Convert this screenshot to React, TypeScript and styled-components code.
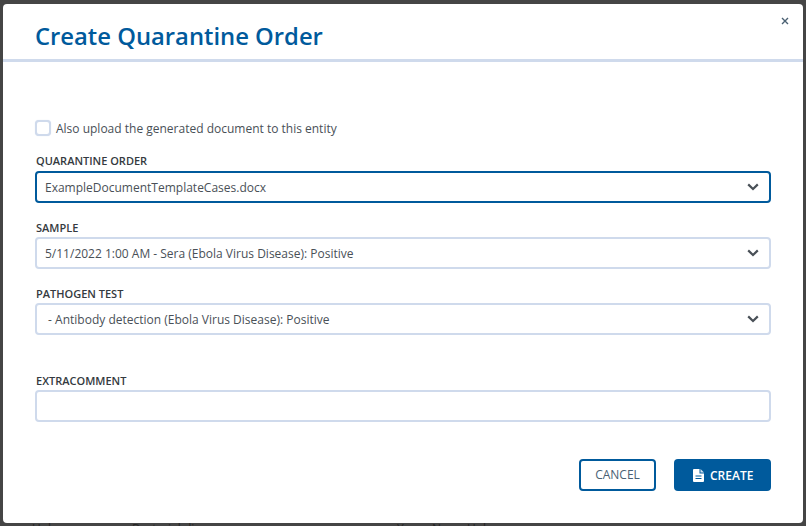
import { ReactNode } from 'react';
import styled, { createGlobalStyle } from 'styled-components';

const GlobalStyle = createGlobalStyle`
    html, body {
        margin: 0;
        padding: 0;
        height: 100%;
        overflow: hidden;
    }
    body {
        font-family: "Open Sans", "Liberation Sans", sans-serif;
        color: #495057;
    }
`

const Backdrop = styled.div`
    box-sizing: border-box;
    width: 806px;
    height: 526px;
    padding: 4px 3px 0;
    background: #454545;
    overflow: hidden;
`

const Modal = styled.div`
    position: relative;
    display: flex;
    flex-direction: column;
    height: 519px;
    background: #ffffff;
    border-radius: 4px;
`

const BehindRow = styled.div`
    display: grid;
    grid-template-columns: 100px 265px 35px 35px auto;
    padding-left: 29px;
    font-size: 12px;
    line-height: 12px;
    color: #242424;
`

const Header = styled.header`
    box-sizing: border-box;
    height: 58px;
    padding: 16px 32px 0;
    border-bottom: 3px solid #cfdaec;
`

const Title = styled.h1`
    margin: 0;
    font-size: 23.8px;
    line-height: 33px;
    font-weight: 600;
    color: #005a9c;
`

const CloseButton = styled.button`
    position: absolute;
    top: 11px;
    right: 12px;
    display: flex;
    width: 12px;
    height: 12px;
    padding: 0;
    border: 0;
    background: none;
    color: #4a6072;
`

const Body = styled.div`
    display: flex;
    flex-direction: column;
    padding: 58px 32px 0;
`

const CheckRow = styled.label`
    display: flex;
    align-items: center;
    gap: 5px;
    height: 16px;
    font-size: 12px;
    color: #495057;
`

const CheckBox = styled.span`
    box-sizing: border-box;
    width: 16px;
    height: 16px;
    border: 2px solid #cfdaec;
    border-radius: 4px;
    background: #ffffff;
    box-shadow: 0 0 1px #cfdaec;
`

const Field = styled.div<{ $top: number }>`
    display: flex;
    flex-direction: column;
    margin-top: ${(p) => p.$top}px;
`

const Label = styled.label<{ $gap: number }>`
    font-size: 11px;
    line-height: 15px;
    font-weight: 600;
    text-transform: uppercase;
    color: #343a40;
    margin-bottom: ${(p) => p.$gap}px;
    padding-left: 1px;
`

const Select = styled.div<{ $focused?: boolean }>`
    box-sizing: border-box;
    display: flex;
    align-items: center;
    justify-content: space-between;
    width: 736px;
    height: 32px;
    padding: 0 10px 0 8px;
    border: 2px solid ${(p) => (p.$focused ? '#005a9c' : '#cfdaec')};
    border-radius: 4px;
    font-size: 12px;
    color: #495057;
    background: #ffffff;
`

const TextInput = styled.div`
    box-sizing: border-box;
    width: 736px;
    height: 32px;
    border: 2px solid #cfdaec;
    border-radius: 4px;
    background: #ffffff;
`

const Footer = styled.footer`
    display: flex;
    justify-content: flex-end;
    gap: 18px;
    margin-top: 37px;
    padding-right: 32px;
`

const CancelButton = styled.button`
    box-sizing: border-box;
    width: 77px;
    height: 32px;
    padding: 0 0 2px;
    border: 2px solid #005a9c;
    border-radius: 4px;
    background: #ffffff;
    font-family: inherit;
    font-size: 12px;
    text-transform: uppercase;
    color: #495f73;
`

const CreateButton = styled.button`
    box-sizing: border-box;
    display: flex;
    align-items: center;
    gap: 6px;
    width: 97px;
    height: 32px;
    padding: 0 0 0 19px;
    border: 0;
    border-radius: 4px;
    background: #005a9c;
    font-family: inherit;
    font-size: 12px;
    font-weight: 600;
    text-transform: uppercase;
    color: #ffffff;
`

function Chevron() {
    return (
        <svg width="12" height="8" viewBox="0 0 12 8" fill="none">
            <path d="M1.2 1.4 L6 6 L10.8 1.4" stroke="#495057" strokeWidth="2.2" />
        </svg>
    )
}

function FileIcon() {
    return (
        <svg width="11" height="13" viewBox="0 0 11 13">
            <path
                d="M1 0 H6.5 V4.5 H11 V12 a1 1 0 0 1 -1 1 H1 a1 1 0 0 1 -1 -1 V1 a1 1 0 0 1 1 -1 Z"
                fill="#ffffff"
            />
            <path d="M7.5 0 L11 3.5 H7.5 Z" fill="#cfe0f0" />
            <path d="M2.5 7 H8.5 M2.5 9.5 H8.5" stroke="#005a9c" strokeWidth="1" />
        </svg>
    )
}

function SelectField(props: { label: string; top: number; gap: number; focused?: boolean; children: ReactNode }) {
    return (
        <Field $top={props.top}>
            <Label $gap={props.gap}>{props.label}</Label>
            <Select $focused={props.focused}>
                <span>{props.children}</span>
                <Chevron />
            </Select>
        </Field>
    )
}

export default function App() {
    return (
        <Backdrop>
            <GlobalStyle />
            <Modal>
                <CloseButton aria-label="Close">
                    <svg width="12" height="12" viewBox="0 0 12 12" fill="none">
                        <path d="M3 3 L9 9 M9 3 L3 9" stroke="currentColor" strokeWidth="1.4" />
                    </svg>
                </CloseButton>
                <Header>
                    <Title>Create Quarantine Order</Title>
                </Header>
                <Body>
                    <CheckRow>
                        <CheckBox />
                        Also upload the generated document to this entity
                    </CheckRow>
                    <SelectField label="Quarantine Order" top={17} gap={3} focused>
                        ExampleDocumentTemplateCases.docx
                    </SelectField>
                    <SelectField label="Sample" top={17} gap={2}>
                        5/11/2022 1:00 AM - Sera (Ebola Virus Disease): Positive
                    </SelectField>
                    <SelectField label="Pathogen Test" top={17} gap={2}>
                        &nbsp;- Antibody detection (Ebola Virus Disease): Positive
                    </SelectField>
                    <Field $top={38}>
                        <Label $gap={2}>ExtraComment</Label>
                        <TextInput />
                    </Field>
                </Body>
                <Footer>
                    <CancelButton>Cancel</CancelButton>
                    <CreateButton>
                        <FileIcon />
                        Create
                    </CreateButton>
                </Footer>
            </Modal>
            <BehindRow>
                <span>Unknown</span>
                <span>Bacterial disease</span>
                <span>Yes</span>
                <span>No</span>
                <span>Unknown</span>
            </BehindRow>
        </Backdrop>
    )
}
